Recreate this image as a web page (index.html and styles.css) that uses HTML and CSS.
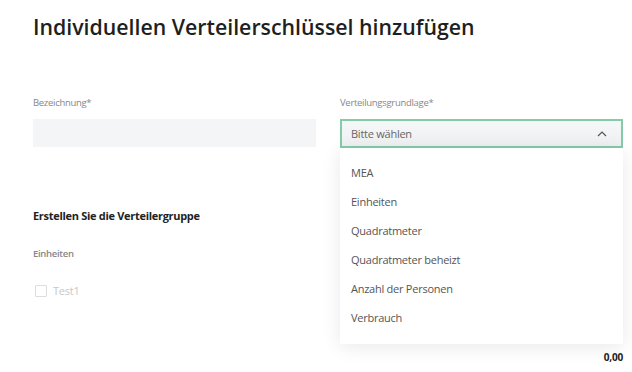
FILE: index.html
```html
<!DOCTYPE html>
<html lang="de">
<head>
  <meta charset="utf-8">
  <title>Verteilerschlüssel hinzufügen</title>
  <link rel="stylesheet" href="styles.css">
</head>
<body>
  <div class="page">
    <h1 class="page-title">Individuellen Verteilerschlüssel hinzufügen</h1>

    <div class="form-row">
      <div class="form-col">
        <label class="field-label">Bezeichnung*</label>
        <div class="text-input"></div>

        <h2 class="section-title">Erstellen Sie die Verteilergruppe</h2>
        <div class="group-label">Einheiten</div>
        <div class="check-row">
          <span class="check-box"></span>
          <span class="check-text">Test1</span>
        </div>
      </div>

      <div class="form-col">
        <label class="field-label">Verteilungsgrundlage*</label>
        <div class="select-wrap">
          <div class="select-box">
            <span class="select-value">Bitte wählen</span>
            <svg class="chevron" width="10" height="6" viewBox="0 0 10 6">
              <path d="M1 5 L5 1 L9 5" fill="none" stroke="#555" stroke-width="1.2"/>
            </svg>
          </div>
          <ul class="select-menu">
            <li>MEA</li>
            <li>Einheiten</li>
            <li>Quadratmeter</li>
            <li>Quadratmeter beheizt</li>
            <li>Anzahl der Personen</li>
            <li>Verbrauch</li>
          </ul>
        </div>
      </div>
    </div>

    <div class="total-row">0,00</div>
  </div>
</body>
</html>
```

FILE: styles.css
```css
html, body {
  margin: 0;
  padding: 0;
  background: #fff;
  font-family: 'Open Sans', 'Noto Sans', sans-serif;
  color: #222;
  overflow: hidden;
}
.page {
  padding: 12px 9px 0 33px;
}
.page-title {
  margin: 0;
  font-size: 21.3px;
  line-height: 30px;
  font-weight: 600;
  color: #1e1f21;
}
.form-row {
  display: grid;
  grid-template-columns: 283px 283px;
  column-gap: 24px;
  margin-top: 54px;
}
.form-col {
  display: flex;
  flex-direction: column;
}
.field-label {
  font-size: 9.5px;
  letter-spacing: -0.3px;
  line-height: 14px;
  color: #888;
  margin-bottom: 9px;
}
.text-input {
  height: 28px;
  background: #f4f5f6;
}
.section-title {
  margin: 60px 0 0 0;
  font-size: 11px;
  letter-spacing: -0.3px;
  line-height: 17px;
  font-weight: 700;
  color: #222;
}
.group-label {
  margin-top: 23px;
  font-size: 9.5px;
  letter-spacing: -0.3px;
  line-height: 14px;
  font-weight: 600;
  color: #888;
}
.check-row {
  display: flex;
  align-items: center;
  margin-top: 21px;
  height: 17px;
  padding-left: 2px;
}
.check-box {
  width: 10px;
  height: 10px;
  border: 1px solid #ddd;
  border-radius: 1px;
  margin-right: 6px;
}
.check-text {
  font-size: 11px;
  letter-spacing: -0.25px;
  color: #c8c8c8;
}
.select-wrap {
  position: relative;
}
.select-box {
  box-sizing: border-box;
  height: 29px;
  border: 2px solid #84cba8;
  background: linear-gradient(#f6f7f8, #eff0f1);
  display: flex;
  align-items: center;
  justify-content: space-between;
  padding: 0 14px 0 9px;
}
.select-value {
  font-size: 11px;
  letter-spacing: -0.25px;
  color: #666;
}
.chevron {
  display: block;
}
.select-menu {
  position: absolute;
  top: 29px;
  left: 0;
  right: 0;
  margin: 0;
  padding: 10px 0 12px 0;
  list-style: none;
  background: #fff;
  box-shadow: 0 3px 18px rgba(0, 0, 0, 0.09);
  z-index: 10;
}
.select-menu li {
  height: 29px;
  line-height: 29px;
  padding-left: 11px;
  font-size: 11px;
  letter-spacing: -0.25px;
  color: #555;
}
.total-row {
  margin-top: 51px;
  text-align: right;
  font-size: 10px;
  letter-spacing: -0.2px;
  line-height: 15px;
  font-weight: 700;
  color: #222;
}
```
